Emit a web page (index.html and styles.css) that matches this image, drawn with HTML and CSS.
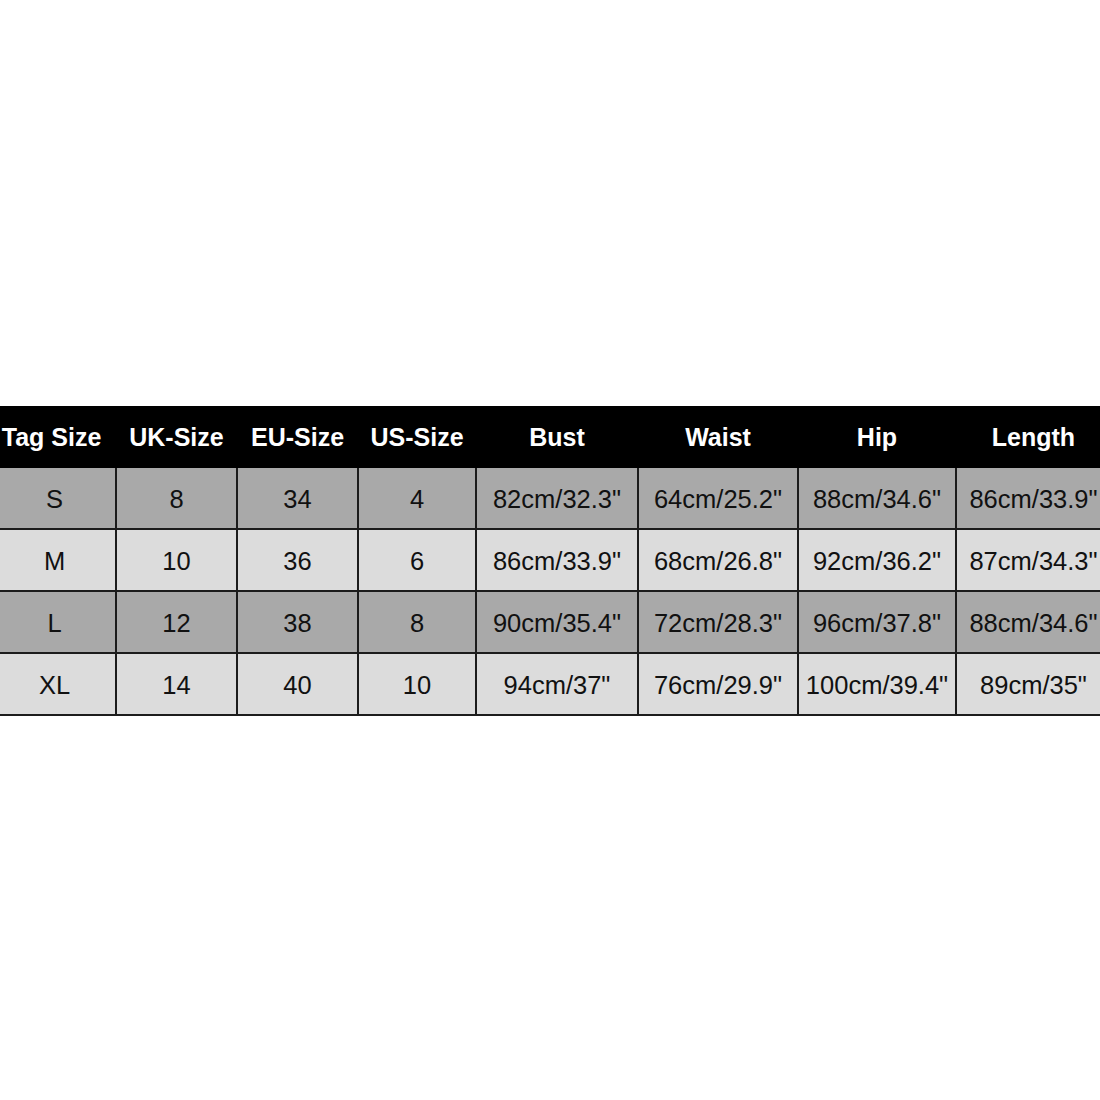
FILE: index.html
```html
<!DOCTYPE html>
<html>
<head>
<meta charset="utf-8">
<link rel="stylesheet" href="styles.css">
</head>
<body>
<div class="page">
  <div class="chart">
    <div class="row head">
      <div class="cell">Tag Size</div><div class="cell">UK-Size</div><div class="cell">EU-Size</div><div class="cell">US-Size</div><div class="cell">Bust</div><div class="cell">Waist</div><div class="cell">Hip</div><div class="cell">Length</div>
    </div>
    <div class="row dark">
      <div class="cell">S</div><div class="cell">8</div><div class="cell">34</div><div class="cell">4</div><div class="cell">82cm/32.3"</div><div class="cell">64cm/25.2"</div><div class="cell">88cm/34.6"</div><div class="cell">86cm/33.9"</div>
    </div>
    <div class="row light">
      <div class="cell">M</div><div class="cell">10</div><div class="cell">36</div><div class="cell">6</div><div class="cell">86cm/33.9"</div><div class="cell">68cm/26.8"</div><div class="cell">92cm/36.2"</div><div class="cell">87cm/34.3"</div>
    </div>
    <div class="row dark">
      <div class="cell">L</div><div class="cell">12</div><div class="cell">38</div><div class="cell">8</div><div class="cell">90cm/35.4"</div><div class="cell">72cm/28.3"</div><div class="cell">96cm/37.8"</div><div class="cell">88cm/34.6"</div>
    </div>
    <div class="row light">
      <div class="cell">XL</div><div class="cell">14</div><div class="cell">40</div><div class="cell">10</div><div class="cell">94cm/37"</div><div class="cell">76cm/29.9"</div><div class="cell">100cm/39.4"</div><div class="cell">89cm/35"</div>
    </div>
  </div>
</div>
</body>
</html>
```

FILE: styles.css
```css
html, body {
  margin: 0;
  padding: 0;
  background: #ffffff;
}

.page {
  width: 1100px;
  height: 1100px;
  padding-top: 406px;
  box-sizing: border-box;
  font-family: "Liberation Sans", Arial, sans-serif;
  overflow: hidden;
}

.row {
  display: grid;
  grid-template-columns: 117px 121px 121px 118px 162px 160px 158px 143px;
  height: 62px;
  box-sizing: border-box;
}

.cell {
  display: flex;
  align-items: center;
  justify-content: center;
  white-space: nowrap;
  box-sizing: border-box;
  border-right: 2px solid #1c1c1c;
}

.cell:first-child {
  padding-right: 6px;
}

.cell:last-child {
  border-right: none;
  padding-left: 10px;
}

.head {
  background: #000000;
  color: #ffffff;
  font-weight: bold;
  font-size: 25px;
}

.head .cell {
  border-right-color: #000000;
}

.head .cell:first-child {
  padding-right: 12px;
}

.dark, .light {
  color: #111111;
  font-size: 25.5px;
  border-bottom: 2px solid #1c1c1c;
}

.dark { background: #a9a9a9; }
.light { background: #dcdcdc; }

.dark .cell, .light .cell {
  padding-top: 2px;
}
```
